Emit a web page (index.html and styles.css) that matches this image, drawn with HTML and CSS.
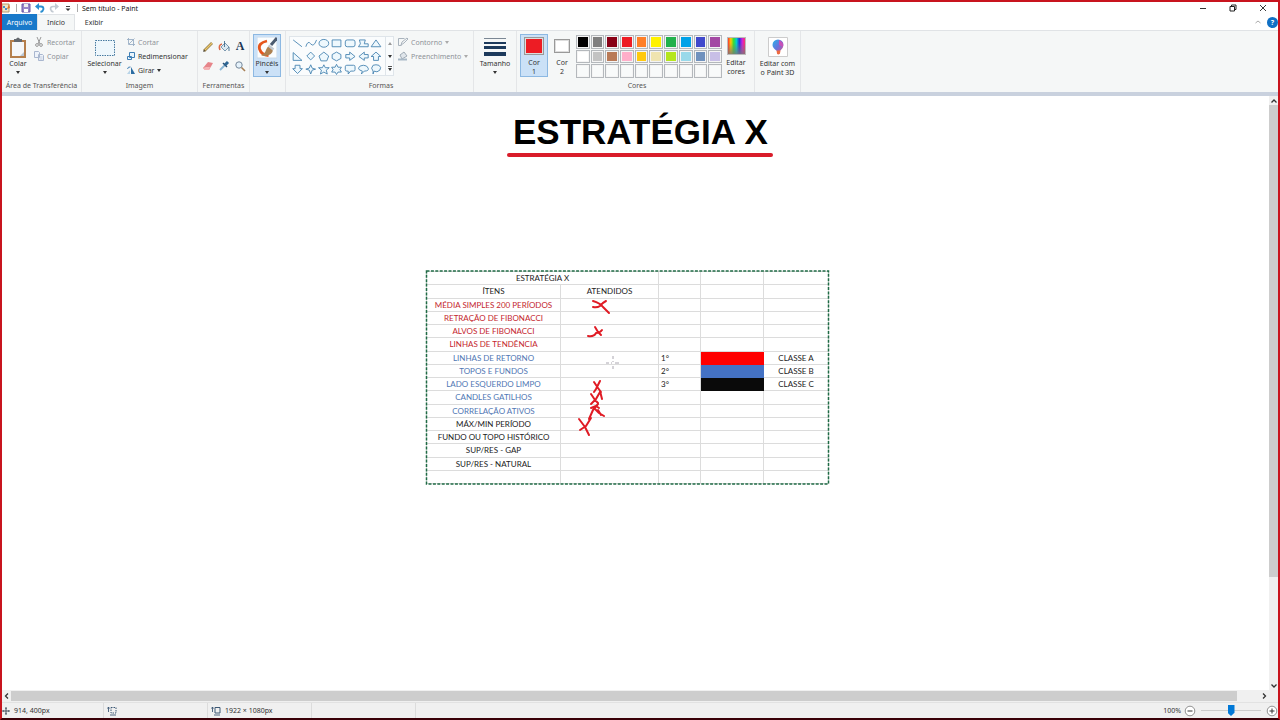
FILE: index.html
```html
<!DOCTYPE html>
<html lang="pt-BR">
<head>
<meta charset="utf-8">
<title>Sem título - Paint</title>
<link rel="stylesheet" href="styles.css">
</head>
<body>
<div class="window">
  <header class="titlebar">
    <svg class="i10" viewBox="0 0 10 10"><path d="M0 1h7v8H0z" fill="#f3e3c3" stroke="#b89a72"/><path d="M1 3h2v2H1zM3 5h2v2H3z" fill="#4a90c8"/><path d="M5 6l2-5 1 4z" fill="#d9772b"/></svg>
    <span class="sep"></span>
    <button class="plain" aria-label="Salvar"><svg class="i10" viewBox="0 0 10 10"><path d="M1 1h8v8H1z" fill="#9a86c8" stroke="#6a55a4"/><path d="M3 1h4v3H3z" fill="#eee"/><path d="M3 6h4v3H3z" fill="#fff"/></svg></button>
    <button class="plain" aria-label="Desfazer"><svg class="i10" viewBox="0 0 10 10"><path d="M4 0L0 3.500 4 7z" fill="#2b8fd0"/><path d="M3 3.500h3q2.500 0 2.500 2.500-.5 2.500-3 3" fill="none" stroke="#2b8fd0" stroke-width="1.800"/></svg></button>
    <button class="plain" aria-label="Refazer"><svg class="i10" viewBox="0 0 10 10"><path d="M6 0l4 3.500L6 7z" fill="#c3cad2"/><path d="M7 3.500H4Q1.500 3.500 1.500 6q.5 2.500 3 3" fill="none" stroke="#c3cad2" stroke-width="1.600"/></svg></button>
    <button class="plain" aria-label="Personalizar"><svg class="i10" viewBox="0 0 10 10"><path d="M3 3.500h4" stroke="#444"/><path d="M2.500 5.500h5L5 8z" fill="#333"/></svg></button>
    <span class="sep"></span>
    <h1 class="title">Sem título - Paint</h1>
    <div class="winctl">
      <button class="plain" aria-label="Minimizar"><svg class="i10" viewBox="0 0 10 10"><path d="M2 5.500h6" stroke="#333"/></svg></button>
      <button class="plain" aria-label="Restaurar"><svg class="i10" viewBox="0 0 10 10"><path d="M2 3.500h4.500V8H2zM3.500 3.500V2H8v4.500H6.500" fill="none" stroke="#222"/></svg></button>
      <button class="plain" aria-label="Fechar"><svg class="i10" viewBox="0 0 10 10"><path d="M2 2l6 6M8 2L2 8" stroke="#222" stroke-width=".9"/></svg></button>
    </div>
  </header>
  <nav class="tabs">
    <button class="tab file">Arquivo</button>
    <button class="tab active">Início</button>
    <button class="tab">Exibir</button>
    <div class="help">
      <button class="plain" aria-label="Recolher"><svg class="i8" viewBox="0 0 8 8"><path d="M1.500 5L4 3l2.500 2" fill="none" stroke="#aaa"/></svg></button>
      <button class="plain round">?</button>
    </div>
  </nav>
  <section class="ribbon">
    <div class="group clip">
      <div class="body">
        <button class="big"><svg class="ibig" viewBox="0 0 20 22"><path d="M2 3h16v18H2z" fill="#b57f4c"/><path d="M4 5h12v14H4z" fill="#f5f7f9"/><path d="M12 19l4-4v4z" fill="#b9c6d4"/><path d="M6 2h2q2-3 4 0h2v3H6z" fill="#65696e"/></svg><span>Colar</span><i class="arr"></i></button>
        <div class="stack">
          <button class="small off"><svg class="i10" viewBox="0 0 10 10"><path d="M3 0l3 7M7 0L4 7" stroke="#999" fill="none"/><circle cx="3" cy="8" r="1.400" fill="none" stroke="#999"/><circle cx="7" cy="8" r="1.400" fill="none" stroke="#999"/></svg>Recortar</button>
          <button class="small off"><svg class="i10" viewBox="0 0 10 10"><path d="M.5.5h4l1 1v5h-5zM4.500 3.500h4l1 1v5h-5z" fill="#eef3fa" stroke="#a9b7cf"/><path d="M5.500 6h3M5.500 8h3" stroke="#a9b7cf" stroke-width=".6"/></svg>Copiar</button>
        </div>
      </div>
      <h2 class="label">Área de Transferência</h2>
    </div>
    <div class="group image">
      <div class="body">
        <button class="big"><svg class="ibig" viewBox="0 0 20 22"><path d="M0 3h20v16H0z" fill="#eef7fc"/><path d="M.5 3.500h19v15H.5z" fill="none" stroke="#47799f" stroke-dasharray="1.500 1"/></svg><span>Selecionar</span><i class="arr"></i></button>
        <div class="stack">
          <button class="small off"><svg class="i8" viewBox="0 0 8 8"><path d="M1.500 0v6.500H8M0 1.500h6.500V8M2 6l5.500-5.500" fill="none" stroke="#9aaec4" stroke-width=".9"/></svg>Cortar</button>
          <button class="small"><svg class="i8" viewBox="0 0 8 8"><path d="M2.500.5h5v5h-5zM.5 4.500h4v3h-4z" fill="#e8f4fc" stroke="#3e7fb5"/></svg>Redimensionar</button>
          <button class="small"><svg class="i8" viewBox="0 0 8 8"><path d="M4 1l4 7H4z" fill="#2c6da3"/><path d="M3 4v4H0z" fill="#b8d4e8"/><path d="M.5 3q.5-2.500 3-2" fill="none" stroke="#3e7fb5"/></svg>Girar<i class="arr"></i></button>
        </div>
      </div>
      <h2 class="label">Imagem</h2>
    </div>
    <div class="group tools">
      <div class="body toolgrid">
        <button class="plain" aria-label="Lápis"><svg class="i12" viewBox="0 0 12 12"><path d="M2 10L10 2" stroke="#8b7440" stroke-width="2.600"/><path d="M3 9L10 2" stroke="#eac56b" stroke-width="1.400"/><path d="M1 11l1-2 1 1z" fill="#333"/></svg></button>
        <button class="plain" aria-label="Preencher"><svg class="i12" viewBox="0 0 12 12"><path d="M3 6l4-4 4 4-4 4z" fill="#dce9f2" stroke="#60839e" stroke-width=".8"/><path d="M2 9Q0 4 4 3" fill="none" stroke="#dc6848" stroke-width="1.600"/><path d="M6.500 0v6M11 6v4" stroke="#446d90" stroke-width=".9"/></svg></button>
        <button class="plain letter" aria-label="Texto">A</button>
        <button class="plain" aria-label="Borracha"><svg class="i12" viewBox="0 0 12 12"><path d="M1 8l5-6 5 1-4 7H3z" fill="#e6858a"/><path d="M1 8l2 2 4 0 1-3-4 0z" fill="#f5b4b5"/></svg></button>
        <button class="plain" aria-label="Selecionar cor"><svg class="i12" viewBox="0 0 12 12"><path d="M2 10l5-5" stroke="#8bb6d4" stroke-width="1.800"/><path d="M5 3l4 4" stroke="#254d72" stroke-width="1.500"/><path d="M7 5l3-3" stroke="#2d6694" stroke-width="3"/></svg></button>
        <button class="plain" aria-label="Lupa"><svg class="i12" viewBox="0 0 12 12"><circle cx="5" cy="5" r="3.200" fill="#e5f2fb" stroke="#75879a"/><path d="M7.500 7.500L11 11" stroke="#a77f55" stroke-width="1.600"/></svg></button>
      </div>
      <h2 class="label">Ferramentas</h2>
    </div>
    <div class="group brushes">
      <div class="body">
        <button class="big on"><svg class="ibig" viewBox="0 0 20 22"><path d="M0 0h20v21H0z" fill="#fbfdfe" stroke="#c8d8e8"/><path d="M10 4Q1 6 2.500 12q2 6 9 6.500" fill="none" stroke="#e5561d" stroke-width="2.800"/><path d="M20 1l-6 7" stroke="#4b5b70" stroke-width="3"/><path d="M12 9l4 3q0 6-8 7-3 0-4-1 4-1 5-5 1-3 3-4z" fill="#ad8252"/><path d="M11.500 8.500l5 4" stroke="#c3c9d0" stroke-width="2.400"/></svg><span>Pincéis</span><i class="arr"></i></button>
      </div>
    </div>
    <div class="group shapes">
      <div class="body">
        <div class="gallery">
          <svg class="shapesvg" viewBox="1 -1 95 39" fill="#eef8fd" stroke="#4582b0" stroke-width=".9">
            <path d="M3 2l9 7M16 9q2-7 5-3t6-4" fill="none"/>
            <ellipse cx="34.500" cy="5.500" rx="5" ry="4"/><path d="M43 2h9v7h-9z"/><rect x="56.500" y="2" width="10" height="7" rx="2"/><path d="M70 9l2-3-1-4h6l-1 4 4 0v3z"/><path d="M88 2l5 7H83z"/>
            <path d="M3 15v8h9zM21 14.500l4 4-4 4-4-4zM34.500 14.500l5 4-2 5h-6l-2-5zM43 17l4.500-2.500L52 17v4l-4.500 2.500L43 21zM57 17h4v-2.500l5.500 4.500-5.500 4v-2.500h-4zM80 17h-4v-2.500L70.500 19l5.500 4v-2.500h4zM88 14.500l-5 4.500h2.500v4h5v-4H93z"/>
            <path d="M5 28h5v3.500h2.500l-5 5-5-5H5zM21 27.500l1.500 3.500 3.500 1-3.500 1-1.500 4-1.500-4-3.500-1 3.500-1zM34.500 27.500l1.500 3h4l-3 2.500 1 4-3.500-2-3.500 2 1-4-3-2.500h4zM47.500 27l1.500 3h3.500L51 32.500l1.500 2.500H49l-1.500 2.500L46 35h-3.500l1.500-2.500-1.500-2.500H46z"/>
            <path d="M58 28h7q1.500 0 1.500 1.500v3q0 1.500-1.500 1.500h-3l-2.500 3v-3H58q-1.500 0-1.500-1.500v-3Q56.500 28 58 28zM74 34q-4-1-4-3 1-3 5-3t5 3-4 3l-3 3z"/><path d="M85 28q3-1 6 0 3 2 1 5-3 3-6 1l-1 3v-3q-3-3 0-6z"/>
          </svg>
          <div class="gscroll">
            <button class="plain" aria-label="Acima"><i class="arr up"></i></button>
            <button class="plain" aria-label="Abaixo"><i class="arr"></i></button>
            <button class="plain more" aria-label="Mais"><i class="arr"></i></button>
          </div>
        </div>
        <div class="stack">
          <button class="small off"><svg class="i10" viewBox="0 0 10 10"><path d="M.5 1.500h6M.5 1.500v7h3M3 8l1-3 5-4 1 1-4 4z" fill="none" stroke="#a9b3bd"/></svg>Contorno<i class="arr"></i></button>
          <button class="small off"><svg class="i10" viewBox="0 0 10 10"><path d="M2 4l4-3 3 4-5 3z" fill="#dfe5ea" stroke="#9fabb6"/><path d="M0 8.500h9" stroke="#a8b8c6" stroke-width="2"/></svg>Preenchimento<i class="arr"></i></button>
        </div>
      </div>
      <h2 class="label">Formas</h2>
    </div>
    <div class="group size">
      <div class="body">
        <button class="big"><svg class="ilines" viewBox="0 0 22 22"><path d="M0 1.500h22" stroke="#7b8794"/><path d="M0 6h22" stroke="#1d3a5c" stroke-width="2"/><path d="M0 10.500h22" stroke="#1d3a5c" stroke-width="3"/><path d="M0 17h22" stroke="#1d3a5c" stroke-width="4"/></svg><span>Tamanho</span><i class="arr"></i></button>
      </div>
    </div>
    <div class="group colors">
      <div class="body">
        <button class="big on"><span class="swatch red"></span><span>Cor<br>1</span></button>
        <button class="big"><span class="swatch second"></span><span>Cor<br>2</span></button>
        <div class="palette">
          <button class="c c1"></button><button class="c c2"></button><button class="c c3"></button><button class="c c4"></button><button class="c c5"></button><button class="c c6"></button><button class="c c7"></button><button class="c c8"></button><button class="c c9"></button><button class="c c10"></button>
          <button class="c c11"></button><button class="c c12"></button><button class="c c13"></button><button class="c c14"></button><button class="c c15"></button><button class="c c16"></button><button class="c c17"></button><button class="c c18"></button><button class="c c19"></button><button class="c c20"></button>
          <button class="c"></button><button class="c"></button><button class="c"></button><button class="c"></button><button class="c"></button><button class="c"></button><button class="c"></button><button class="c"></button><button class="c"></button><button class="c"></button>
        </div>
        <button class="big"><span class="rainbow"></span><span>Editar<br>cores</span></button>
      </div>
      <h2 class="label">Cores</h2>
    </div>
    <div class="group p3d">
      <div class="body">
        <button class="big"><svg class="ibig" viewBox="0 0 20 22"><defs><linearGradient id="drop" x1="0" y1="0" x2="1" y2="1"><stop offset="0" stop-color="#26b5ea"/><stop offset=".5" stop-color="#6972dc"/><stop offset="1" stop-color="#f04a77"/></linearGradient></defs><path d="M.5.5h19v19H.5z" fill="#fff" stroke="#ccc"/><path d="M10 2.500a5.500 5.500 0 0 1 5.500 5.500q0 3-3.500 6v2q-2 2-3 0v-2q-4.500-3-4.500-6a5.500 5.500 0 0 1 5.500-5.500z" fill="url(#drop)"/><path d="M8.500 13.500l4 0-.5 3q-2 2-3 0z" fill="#ef6b3f"/><path d="M11 3q5 2 4 7l-4-2z" fill="#c650ba"/></svg><span>Editar com<br>o Paint 3D</span></button>
      </div>
    </div>
  </section>
  <main class="work">
    <div class="canvas">
      <h2 class="heading">ESTRATÉGIA X</h2>
      <table class="sheet">
        <colgroup><col class="w1"><col class="w2"><col class="w3"><col class="w4"><col class="w5"></colgroup>
        <tbody>
        <tr><td colspan="2">ESTRATÉGIA X</td><td></td><td></td><td></td></tr>
        <tr><td>ÍTENS</td><td>ATENDIDOS</td><td></td><td></td><td></td></tr>
        <tr class="r"><td>MÉDIA SIMPLES 200 PERÍODOS</td><td></td><td></td><td></td><td></td></tr>
        <tr class="r"><td>RETRAÇÃO DE FIBONACCI</td><td></td><td></td><td></td><td></td></tr>
        <tr class="r"><td>ALVOS DE FIBONACCI</td><td></td><td></td><td></td><td></td></tr>
        <tr class="r"><td>LINHAS DE TENDÊNCIA</td><td></td><td></td><td></td><td></td></tr>
        <tr class="b"><td>LINHAS DE RETORNO</td><td></td><td class="n">1°</td><td class="fr"></td><td>CLASSE A</td></tr>
        <tr class="b"><td>TOPOS E FUNDOS</td><td></td><td class="n">2°</td><td class="fb"></td><td>CLASSE B</td></tr>
        <tr class="b"><td>LADO ESQUERDO LIMPO</td><td></td><td class="n">3°</td><td class="fk"></td><td>CLASSE C</td></tr>
        <tr class="b"><td>CANDLES GATILHOS</td><td></td><td></td><td></td><td></td></tr>
        <tr class="b"><td>CORRELAÇÃO ATIVOS</td><td></td><td></td><td></td><td></td></tr>
        <tr><td>MÁX/MIN PERÍODO</td><td></td><td></td><td></td><td></td></tr>
        <tr><td>FUNDO OU TOPO HISTÓRICO</td><td></td><td></td><td></td><td></td></tr>
        <tr><td>SUP/RES - GAP</td><td></td><td></td><td></td><td></td></tr>
        <tr><td>SUP/RES - NATURAL</td><td></td><td></td><td></td><td></td></tr>
        <tr><td></td><td></td><td></td><td></td><td></td></tr>
        </tbody>
      </table>
      <svg class="ink" viewBox="420 264 416 228">
        <rect x="426.500" y="271" width="402" height="213" fill="none" stroke="#1f6b45" stroke-width="1.500" stroke-dasharray="3 1.400"/>
        <g fill="none" stroke="#e01b24" stroke-width="2" stroke-linecap="round" stroke-linejoin="round">
          <path d="M593 301q7 2 10 6l6 6M606 301q-4 2-6 5-3 2-7 1"/>
          <path d="M595 327l3 5 3 3M602 330q-2 3-6 3-2 4-8 3"/>
          <path d="M594 382l4 6 3 4M600 381l-4 8-2 3M591 394l4 6 3 3M600 392l-4 7-5 5M600 391l2 8"/>
          <path d="M591 408l5-2 3 2M598 404l-5 6-4 9M595 409l4 4 5 3M598 410l3 5"/>
          <path d="M579 419l6 8 4 8M591 418l-5 8-6 4"/>
        </g>
        <path d="M606 363h3M611 363h1M615 363h4M613 356v3M613 361v1M613 366v3" stroke="#aaa6b0" stroke-width="1" fill="none"/>
      </svg>
    </div>
    <div class="vscroll">
      <button class="plain" aria-label="Rolar para cima"><svg class="i8" viewBox="0 0 8 8"><path d="M1.500 5.500L4 3l2.500 2.500" fill="none" stroke="#333" stroke-width="1.300"/></svg></button>
      <div class="track"><div class="thumb"></div></div>
      <button class="plain" aria-label="Rolar para baixo"><svg class="i8" viewBox="0 0 8 8"><path d="M1.500 2.500L4 5l2.500-2.500" fill="none" stroke="#333" stroke-width="1.300"/></svg></button>
    </div>
  </main>
  <div class="hscroll">
    <button class="plain" aria-label="Rolar para a esquerda"><svg class="i8" viewBox="0 0 8 8"><path d="M5 1.500L2.500 4 5 6.500" fill="none" stroke="#333" stroke-width="1.300"/></svg></button>
    <div class="track"><div class="thumb"></div></div>
    <button class="plain" aria-label="Rolar para a direita"><svg class="i8" viewBox="0 0 8 8"><path d="M3 1.500L5.500 4 3 6.500" fill="none" stroke="#333" stroke-width="1.300"/></svg></button>
  </div>
  <footer class="status">
    <div class="cell"><svg class="i8" viewBox="0 0 8 8"><path d="M4 0v8M0 4h8" stroke="#46505e"/><path d="M3 1.500h2M3 6.500h2M1.500 3v2M6.500 3v2" stroke="#46505e" stroke-width=".6"/></svg>914, 400px</div>
    <div class="cell"><svg class="i10" viewBox="0 0 10 10"><path d="M1.500 1v5M.5 2.500l1-1.500 1 1.500M3 9h6" stroke="#3d5875" fill="none" stroke-width=".9"/><path d="M4 1.500h5v5.500H4z" fill="none" stroke="#3d5875" stroke-dasharray="1.500 1"/></svg></div>
    <div class="cell"><svg class="i10" viewBox="0 0 10 10"><path d="M1.500 1v5M.5 2.500l1-1.500 1 1.500M3 9h6" stroke="#3d5875" fill="none" stroke-width=".9"/><path d="M4 1.500h5v5.500H4z" fill="none" stroke="#3d5875"/></svg>1922 × 1080px</div>
    <div class="cell"></div>
    <div class="zoom">
      <label for="zoom">100%</label>
      <button class="plain" aria-label="Reduzir"><svg class="i12" viewBox="0 0 12 12"><circle cx="6" cy="6" r="4.800" fill="#fff" stroke="#777" stroke-width=".8"/><path d="M3.500 6h5" stroke="#333"/></svg></button>
      <input id="zoom" class="range" type="range" min="0" max="100" value="50">
      <button class="plain" aria-label="Ampliar"><svg class="i12" viewBox="0 0 12 12"><circle cx="6" cy="6" r="4.800" fill="#fff" stroke="#777" stroke-width=".8"/><path d="M3.500 6h5M6 3.500v5" stroke="#333"/></svg></button>
    </div>
  </footer>
</div>
</body>
</html>
```

FILE: styles.css
```css
* { box-sizing: border-box; }
body { margin: 0; font: 7px/9px "Noto Sans", "Open Sans", sans-serif; color: #333; }
h1, h2 { margin: 0; font-size: inherit; font-weight: 400; }
svg { display: block; flex: none; }
button { font: inherit; color: inherit; border: 0; padding: 0; background: none; }
.i8 { width: 8px; height: 8px; }
.i10 { width: 10px; height: 10px; }
.i12 { width: 12px; height: 12px; }
.plain { display: flex; align-items: center; justify-content: center; }
.window { height: 100vh; display: flex; flex-direction: column; border: 2px solid #c8141e; border-bottom-color: #3a0008; background: #fff; }

.titlebar { display: flex; align-items: center; gap: 4px; height: 12px; flex: none; }
.sep { width: 1px; height: 8px; background: #aaa; }
.title { color: #111; }
.winctl { margin-left: auto; display: flex; gap: 20px; margin-right: 10px; }

.tabs { display: flex; height: 17px; flex: none; border-bottom: 1px solid #e0e3e6; }
.tab { width: 38px; color: #333; }
.tab.file { width: 35px; background: #1979ca; color: #fff; }
.tab.active { background: #f5f7f7; border: 1px solid #e0e3e6; border-bottom: 0; }
.help { margin-left: auto; display: flex; align-items: center; gap: 5px; }
.round { width: 11px; height: 11px; border-radius: 50%; background: #1070c4; color: #fff; font-weight: 700; }

.ribbon { display: flex; height: 65px; flex: none; background: #f5f7f7; border-bottom: 4px solid #c9d1de; }
.group { display: flex; flex-direction: column; border-right: 1px solid #e4e6e8; padding: 3px 0 2px; }
.body { display: flex; flex: 1; align-items: flex-start; }
.label { text-align: center; color: #555; white-space: nowrap; }
.clip { width: 80px; }
.image { width: 116px; }
.tools { width: 52px; }
.brushes { width: 36px; padding-left: 3px; }
.shapes { width: 188px; padding-left: 3px; }
.size { width: 43px; }
.colors { width: 238px; padding-left: 3px; }
.p3d { width: 46px; }
.big { display: flex; flex-direction: column; align-items: center; width: 28px; height: 43px; padding-top: 2px; border: 1px solid transparent; white-space: nowrap; }
.big.on { background: #cbe1f7; border-color: #8cb8e2; }
.ibig { width: 20px; height: 22px; }
.ilines { width: 22px; height: 22px; }
.clip .big { width: 32px; }
.image .big { width: 45px; }
.size .big, .p3d .big { width: 100%; }
.arr { width: 0; height: 0; margin-top: 3px; border: 2px solid transparent; border-top: 3px solid #333; border-bottom: 0; }
.arr.up { border-top: 0; border-bottom: 3px solid #999; margin: 0; }
.stack { display: flex; flex-direction: column; gap: 4px; padding-top: 3px; }
.small { display: flex; align-items: center; gap: 3px; height: 10px; white-space: nowrap; }
.small .arr { margin: 0; }
.off { color: #8e9298; }
.off .arr { border-top-color: #aaa; }
.toolgrid { display: grid; grid-template-columns: repeat(3, 16px); grid-auto-rows: 19px; padding: 3px 0 0 2px; align-content: start; }
.toolgrid .plain { height: 19px; }
.letter { font: 700 12px "Liberation Serif", serif; color: #1d3655; }
.gallery { display: flex; width: 105px; height: 40px; margin-top: 2px; border: 1px solid #dfe5ea; background: #fafcfd; }
.shapesvg { width: 95px; height: 38px; }
.gscroll { flex: 1; display: flex; flex-direction: column; border-left: 1px solid #dfe5ea; }
.gscroll .plain { flex: 1; }
.gscroll .arr { margin: 0; }
.gscroll .more { flex-direction: column; gap: 1px; }
.more::before { content: ""; width: 4px; height: 1px; background: #555; }
.shapes .stack { padding-left: 4px; }
.swatch { width: 20px; height: 20px; margin-bottom: 3px; border: 1px solid #999; box-shadow: inset 0 0 0 1px #ddd; background: #ed1c24; }
.swatch.second { width: 16px; height: 16px; margin: 2px 0 5px; background: #fff; }
.palette { display: grid; grid-template-columns: repeat(10, 1fr); gap: 1px; width: 146px; height: 43px; margin-top: 1px; }
.c { border: 1px solid #b4b8bc; background: #f8fafa; box-shadow: inset 0 0 0 1px #f4f4f4; }
.c1 { background: #000; } .c2 { background: #7f7f7f; } .c3 { background: #880015; } .c4 { background: #ed1c24; } .c5 { background: #ff7f27; }
.c6 { background: #fff200; } .c7 { background: #22b14c; } .c8 { background: #00a2e8; } .c9 { background: #3f48cc; } .c10 { background: #a349a4; }
.c11 { background: #fff; } .c12 { background: #c3c3c3; } .c13 { background: #b97a57; } .c14 { background: #ffaec9; } .c15 { background: #ffc90e; }
.c16 { background: #efe4b0; } .c17 { background: #b5e61d; } .c18 { background: #99d9ea; } .c19 { background: #7092be; } .c20 { background: #c8bfe7; }
.rainbow { width: 19px; height: 20px; margin-bottom: 3px; border: 1px solid #bbb; background: linear-gradient(transparent 30%, #777c), linear-gradient(90deg, #f33, #fc0, #3d3, #0cc, #23d, #c2d, #f36); }

.work { flex: 1; display: flex; min-height: 0; }
.canvas { flex: 1; position: relative; overflow: hidden; background: #fff; }
.heading { position: absolute; left: 505px; top: 14px; padding: 0 5px 0 6px; font: 700 35px/43px "Liberation Sans", Arial, sans-serif; color: #000; white-space: nowrap; }
.heading::after { content: ""; position: absolute; left: 0; right: 0; bottom: -4px; height: 4px; border-radius: 2px; background: #d91c2a; }
.sheet { position: absolute; left: 424px; top: 175px; width: 402px; height: 213px; table-layout: fixed; border-collapse: collapse; font: 8px/10px Lato, "Noto Sans", sans-serif; color: #222; }
.sheet tr { height: 13px; }
.sheet td { padding: 0; border: 1px solid #dcdcdc; text-align: center; white-space: nowrap; }
.w1 { width: 134px; } .w2 { width: 98px; } .w3 { width: 42px; } .w4 { width: 63px; } .w5 { width: 65px; }
.r td:first-child { color: #c4262e; }
.b td:first-child { color: #5177b4; }
.sheet .n { text-align: left; padding-left: 2px; }
.sheet .fr { background: #f00; border-color: #f00; }
.sheet .fb { background: #4472c4; border-color: #4472c4; }
.sheet .fk { background: #0a0a0a; border-color: #0a0a0a; }
.ink { position: absolute; left: 418px; top: 168px; width: 416px; height: 228px; }

.vscroll { width: 9px; display: flex; flex-direction: column; background: #f0f0f0; }
.vscroll .plain { height: 9px; }
.track { flex: 1; display: flex; }
.vscroll .track { flex-direction: column; }
.thumb { background: #cdcdcd; }
.vscroll .thumb { height: 82%; }
.hscroll { height: 12px; flex: none; display: flex; padding: 1px 10px 1px 0; background: #f0f0f0; }
.hscroll .plain { width: 9px; }
.hscroll .thumb { width: 99%; flex: none; }
.hscroll .track { padding-right: 10px; }

.status { display: flex; height: 16px; flex: none; background: #f0f0f0; border-top: 1px solid #e2e2e2; }
.cell { width: 104px; display: flex; align-items: center; gap: 4px; border-right: 1px solid #dcdcdc; }
.cell:first-child { width: 102px; }
.cell + .cell { padding-left: 3px; }
.zoom { margin-left: auto; display: flex; align-items: center; gap: 3px; }
.range { appearance: none; width: 60px; height: 12px; margin: 0 2px; background: linear-gradient(#ccc, #ccc) center / 100% 1px no-repeat; }
.range::-webkit-slider-thumb { appearance: none; width: 7px; height: 11px; background: #0078d7; clip-path: polygon(0 0, 100% 0, 100% 70%, 50% 100%, 0 70%); }
```
